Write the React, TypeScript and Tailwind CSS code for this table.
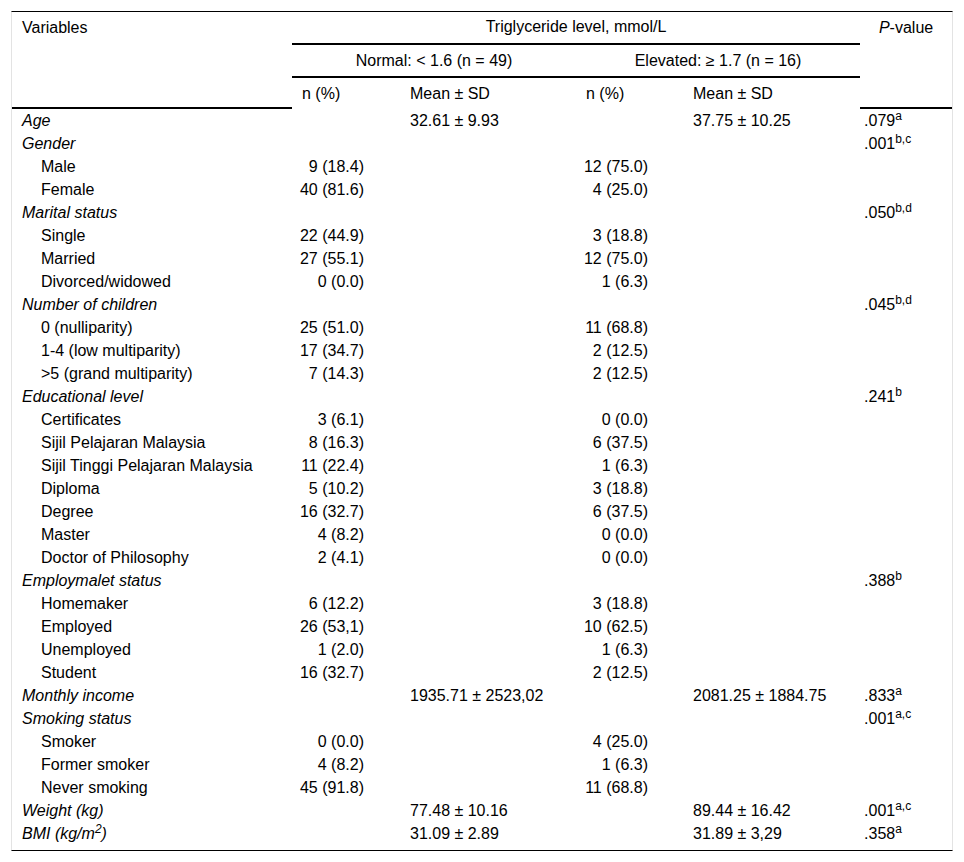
import React from "react";

type Row = {
  label: React.ReactNode;
  cat?: boolean;
  n1?: string;
  m1?: string;
  n2?: string;
  m2?: string;
  p?: React.ReactNode;
};

const P = ({ v, s }: { v: string; s: string }) => (
  <>
    {v}
    <sup className="text-[12px]">{s}</sup>
  </>
);

const rows: Row[] = [
  { label: "Age", cat: true, m1: "32.61 ± 9.93", m2: "37.75 ± 10.25", p: <P v=".079" s="a" /> },
  { label: "Gender", cat: true, p: <P v=".001" s="b,c" /> },
  { label: "Male", n1: "9 (18.4)", n2: "12 (75.0)" },
  { label: "Female", n1: "40 (81.6)", n2: "4 (25.0)" },
  { label: "Marital status", cat: true, p: <P v=".050" s="b,d" /> },
  { label: "Single", n1: "22 (44.9)", n2: "3 (18.8)" },
  { label: "Married", n1: "27 (55.1)", n2: "12 (75.0)" },
  { label: "Divorced/widowed", n1: "0 (0.0)", n2: "1 (6.3)" },
  { label: "Number of children", cat: true, p: <P v=".045" s="b,d" /> },
  { label: "0 (nulliparity)", n1: "25 (51.0)", n2: "11 (68.8)" },
  { label: "1-4 (low multiparity)", n1: "17 (34.7)", n2: "2 (12.5)" },
  { label: ">5 (grand multiparity)", n1: "7 (14.3)", n2: "2 (12.5)" },
  { label: "Educational level", cat: true, p: <P v=".241" s="b" /> },
  { label: "Certificates", n1: "3 (6.1)", n2: "0 (0.0)" },
  { label: "Sijil Pelajaran Malaysia", n1: "8 (16.3)", n2: "6 (37.5)" },
  { label: "Sijil Tinggi Pelajaran Malaysia", n1: "11 (22.4)", n2: "1 (6.3)" },
  { label: "Diploma", n1: "5 (10.2)", n2: "3 (18.8)" },
  { label: "Degree", n1: "16 (32.7)", n2: "6 (37.5)" },
  { label: "Master", n1: "4 (8.2)", n2: "0 (0.0)" },
  { label: "Doctor of Philosophy", n1: "2 (4.1)", n2: "0 (0.0)" },
  { label: "Employmalet status", cat: true, p: <P v=".388" s="b" /> },
  { label: "Homemaker", n1: "6 (12.2)", n2: "3 (18.8)" },
  { label: "Employed", n1: "26 (53,1)", n2: "10 (62.5)" },
  { label: "Unemployed", n1: "1 (2.0)", n2: "1 (6.3)" },
  { label: "Student", n1: "16 (32.7)", n2: "2 (12.5)" },
  { label: "Monthly income", cat: true, m1: "1935.71 ± 2523,02", m2: "2081.25 ± 1884.75", p: <P v=".833" s="a" /> },
  { label: "Smoking status", cat: true, p: <P v=".001" s="a,c" /> },
  { label: "Smoker", n1: "0 (0.0)", n2: "4 (25.0)" },
  { label: "Former smoker", n1: "4 (8.2)", n2: "1 (6.3)" },
  { label: "Never smoking", n1: "45 (91.8)", n2: "11 (68.8)" },
  { label: "Weight (kg)", cat: true, m1: "77.48 ± 10.16", m2: "89.44 ± 16.42", p: <P v=".001" s="a,c" /> },
  {
    label: (
      <>
        BMI (kg/m<sup className="text-[12px]">2</sup>)
      </>
    ),
    cat: true,
    m1: "31.09 ± 2.89",
    m2: "31.89 ± 3,29",
    p: <P v=".358" s="a" />,
  },
];

export default function App() {
  return (
    <div
      className="bg-white text-black pt-[11px] px-[11px] pb-[11px]"
      style={{ fontFamily: '"Liberation Sans", Arial, sans-serif' }}
    >
      <div className="border-t border-t-black border-b border-b-black border-x border-x-[#e3e3e3] pb-[5px]">
        <table className="table-fixed border-separate border-spacing-0 w-[940px] text-[16px]">
          <colgroup>
            <col className="w-[280px]" />
            <col className="w-[108px]" />
            <col className="w-[176px]" />
            <col className="w-[107px]" />
            <col className="w-[177px]" />
            <col className="w-[92px]" />
          </colgroup>
          <thead>
            <tr className="h-[33px]">
              <th rowSpan={3} className="align-top text-left font-normal pl-[10px] pt-[5px] border-b-2 border-black leading-[22px]">
                Variables
              </th>
              <th colSpan={4} className="font-normal text-center border-b-2 border-black leading-[22px] pb-[2px]">
                Triglyceride level, mmol/L
              </th>
              <th rowSpan={3} className="align-top text-center font-normal pt-[5px] border-b-2 border-black leading-[22px]">
                <i>P</i>-value
              </th>
            </tr>
            <tr className="h-[33px]">
              <th colSpan={2} className="font-normal text-center border-b-2 border-black leading-[22px]">
                Normal: &lt; 1.6 (n = 49)
              </th>
              <th colSpan={2} className="font-normal text-center border-b-2 border-black leading-[22px]">
                Elevated: ≥ 1.7 (n = 16)
              </th>
            </tr>
            <tr className="h-[31px]">
              <th className="font-normal text-left pl-[10px] leading-[22px]">n (%)</th>
              <th className="font-normal text-left pl-[10px] leading-[22px]">Mean ± SD</th>
              <th className="font-normal text-left pl-[10px] leading-[22px]">n (%)</th>
              <th className="font-normal text-left pl-[10px] leading-[22px]">Mean ± SD</th>
            </tr>
          </thead>
          <tbody>
            {rows.map((r, i) => (
              <tr key={i} className="h-[23px] leading-[23px]">
                <td className={r.cat ? "italic pl-[10px] whitespace-nowrap" : "pl-[29px] whitespace-nowrap"}>{r.label}</td>
                <td className="text-right pr-[36px] whitespace-nowrap">{r.n1}</td>
                <td className="pl-[10px] whitespace-nowrap">{r.m1}</td>
                <td className="text-right pr-[35px] whitespace-nowrap">{r.n2}</td>
                <td className="pl-[10px] whitespace-nowrap">{r.m2}</td>
                <td className="pl-[4px] whitespace-nowrap">{r.p}</td>
              </tr>
            ))}
          </tbody>
        </table>
      </div>
    </div>
  );
}
